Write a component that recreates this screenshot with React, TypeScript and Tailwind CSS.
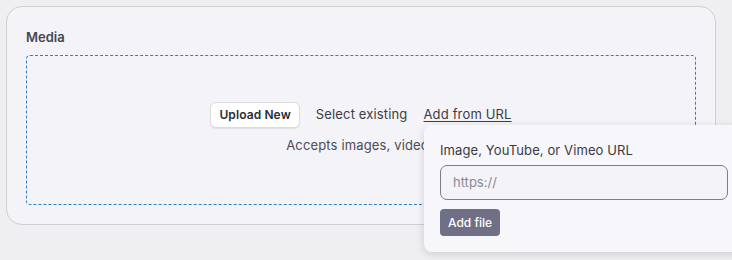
import React from "react";

export default function App() {
  return (
    <div
      className="relative w-[732px] h-[260px] overflow-hidden bg-[#efeef1] pt-[6px] pl-[6px]"
      style={{ fontFamily: "Inter, 'Open Sans', sans-serif" }}
    >
      <div className="w-[710px] h-[219px] rounded-[16px] border border-[#cfcfd4] bg-[#f4f3f7] px-[19px] pt-[21px]">
        <div className="text-[13px] font-semibold text-[#46464f] leading-[18px]">Media</div>
        <div className="mt-[9px] h-[150px] w-[670px] rounded-[4px] border border-dashed border-[#2f7fc4] flex flex-col items-center pt-[46px]">
          <div className="flex items-center gap-[16px]">
            <button className="h-[26px] px-[8px] rounded-[6px] bg-white border border-[#dcdce0] shadow-[0_1px_1px_rgba(0,0,0,0.08)] text-[12px] font-semibold text-[#2c2c33] tracking-[0.1px]">
              Upload New
            </button>
            <span className="text-[13px] text-[#3c3c44] tracking-[0.15px]">Select existing</span>
            <span className="text-[13px] text-[#3c3c44] underline underline-offset-2 tracking-[0.15px]">Add from URL</span>
          </div>
          <div className="mt-[8px] text-[13px] text-[#4c4c55] tracking-[0.15px]">Accepts images, videos</div>
        </div>
      </div>

      <div className="absolute left-[424px] top-[125px] w-[320px] h-[127px] rounded-[8px] bg-[#f7f6fa] shadow-[0_2px_8px_rgba(0,0,0,0.15)] px-[16px] pt-[16px]">
        <div className="text-[13px] text-[#3a3a42] leading-[18px] tracking-[0.1px]">Image, YouTube, or Vimeo URL</div>
        <div className="mt-[6px] h-[35px] w-[288px] rounded-[7px] border border-[#7d7d85] bg-[#f4f3f7] flex items-center px-[12px] text-[13px] text-[#8a8a92]">
          https://
        </div>
        <button className="mt-[9px] h-[27px] px-[8px] rounded-[4px] bg-[#6f6f86] text-white text-[12px] font-medium">
          Add file
        </button>
      </div>
    </div>
  );
}
